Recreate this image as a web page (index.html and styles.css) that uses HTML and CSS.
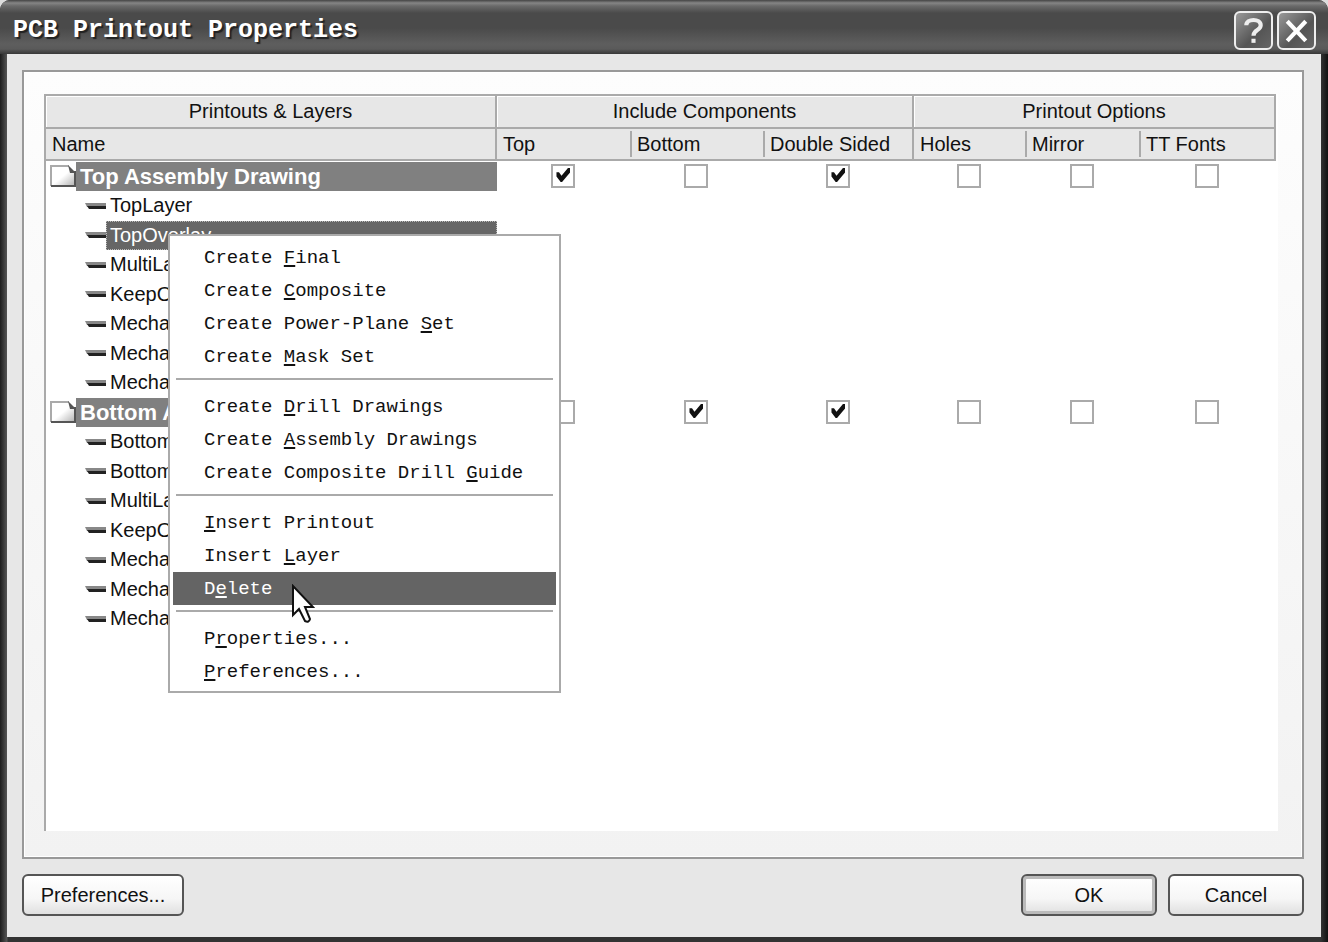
FILE: index.html
```html
<!DOCTYPE html>
<html lang="en">
<head>
    <meta charset="UTF-8">
    <meta name="viewport" content="width=device-width, initial-scale=1.0">
    <title>PCB Printout Properties</title>
    <link rel="stylesheet" href="styles.css">
</head>
<body>
    <svg width="0" height="0" class="defs" aria-hidden="true">
        <defs>
            <linearGradient id="paper" x1="0" y1="0" x2="1" y2="1">
                <stop offset="0.5" stop-color="#fff"/>
                <stop offset="1" stop-color="#b0b0b0"/>
            </linearGradient>
            <symbol id="page" viewBox="0 0 26 22">
                <path d="M1 1H19L25 7V21H1Z" fill="url(#paper)"/>
                <path d="M1 21V1H19" fill="none" stroke="#aaa" stroke-width="2"/>
                <path d="M1 21H25V6" fill="none" stroke="#555" stroke-width="2"/>
                <path d="M18 0L26 8H20Z" fill="#555"/>
            </symbol>
            <symbol id="layer" viewBox="0 0 21 6">
                <path d="M0 0H21V4H2Z" fill="#888"/>
                <path d="M2 3H21V6H4Z" fill="#222"/>
            </symbol>
        </defs>
    </svg>

    <div class="dialog">
        <div class="title-bar">
            <h1>PCB Printout Properties</h1>
            <button class="title-button" aria-label="Help">
                <svg viewBox="0 0 34 34"><path d="M10 12C10 5 24 5 24 12C24 17 17 16 17 22" fill="none" stroke="#eee" stroke-width="4"/><path d="M15 25H19V29H15Z" fill="#eee"/></svg>
            </button>
            <button class="title-button" aria-label="Close">
                <svg viewBox="0 0 34 34"><path d="M8 8L26 27M26 8L8 27" stroke="#fff" stroke-width="4"/></svg>
            </button>
        </div>

        <div class="content">
            <div class="panel">
                <div class="list">
                    <table>
                        <colgroup>
                            <col>
                            <col class="col-top">
                            <col class="col-bottom">
                            <col class="col-double">
                            <col class="col-holes">
                            <col class="col-mirror">
                            <col class="col-fonts">
                        </colgroup>
                        <thead>
                            <tr class="groups">
                                <th>Printouts &amp; Layers</th>
                                <th colspan="3">Include Components</th>
                                <th colspan="3">Printout Options</th>
                            </tr>
                            <tr class="columns">
                                <th class="first"><span>Name</span></th>
                                <th class="first"><span>Top</span></th>
                                <th><span>Bottom</span></th>
                                <th><span>Double Sided</span></th>
                                <th class="first"><span>Holes</span></th>
                                <th><span>Mirror</span></th>
                                <th><span>TT Fonts</span></th>
                            </tr>
                        </thead>
                        <tbody>
                            <tr>
                                <td><div class="printout"><svg class="page-icon"><use href="#page"/></svg><span>Top Assembly Drawing</span></div></td>
                                <td><input type="checkbox" aria-label="Top" checked></td>
                                <td><input type="checkbox" aria-label="Bottom"></td>
                                <td><input type="checkbox" aria-label="Double Sided" checked></td>
                                <td><input type="checkbox" aria-label="Holes"></td>
                                <td><input type="checkbox" aria-label="Mirror"></td>
                                <td><input type="checkbox" aria-label="TT Fonts"></td>
                            </tr>
                            <tr><td><div class="layer"><svg class="layer-icon"><use href="#layer"/></svg><span>TopLayer</span></div></td></tr>
                            <tr><td><div class="layer selected"><svg class="layer-icon"><use href="#layer"/></svg><span>TopOverlay</span></div></td></tr>
                            <tr><td><div class="layer"><svg class="layer-icon"><use href="#layer"/></svg><span>MultiLayer</span></div></td></tr>
                            <tr><td><div class="layer"><svg class="layer-icon"><use href="#layer"/></svg><span>KeepOutLayer</span></div></td></tr>
                            <tr><td><div class="layer"><svg class="layer-icon"><use href="#layer"/></svg><span>Mechanical1</span></div></td></tr>
                            <tr><td><div class="layer"><svg class="layer-icon"><use href="#layer"/></svg><span>Mechanical4</span></div></td></tr>
                            <tr><td><div class="layer"><svg class="layer-icon"><use href="#layer"/></svg><span>Mechanical16</span></div></td></tr>
                            <tr>
                                <td><div class="printout"><svg class="page-icon"><use href="#page"/></svg><span>Bottom Assembly Drawing</span></div></td>
                                <td><input type="checkbox" aria-label="Top"></td>
                                <td><input type="checkbox" aria-label="Bottom" checked></td>
                                <td><input type="checkbox" aria-label="Double Sided" checked></td>
                                <td><input type="checkbox" aria-label="Holes"></td>
                                <td><input type="checkbox" aria-label="Mirror"></td>
                                <td><input type="checkbox" aria-label="TT Fonts"></td>
                            </tr>
                            <tr><td><div class="layer"><svg class="layer-icon"><use href="#layer"/></svg><span>BottomLayer</span></div></td></tr>
                            <tr><td><div class="layer"><svg class="layer-icon"><use href="#layer"/></svg><span>BottomOverlay</span></div></td></tr>
                            <tr><td><div class="layer"><svg class="layer-icon"><use href="#layer"/></svg><span>MultiLayer</span></div></td></tr>
                            <tr><td><div class="layer"><svg class="layer-icon"><use href="#layer"/></svg><span>KeepOutLayer</span></div></td></tr>
                            <tr><td><div class="layer"><svg class="layer-icon"><use href="#layer"/></svg><span>Mechanical1</span></div></td></tr>
                            <tr><td><div class="layer"><svg class="layer-icon"><use href="#layer"/></svg><span>Mechanical4</span></div></td></tr>
                            <tr><td><div class="layer"><svg class="layer-icon"><use href="#layer"/></svg><span>Mechanical16</span></div></td></tr>
                        </tbody>
                    </table>
                </div>
            </div>

            <div class="footer">
                <button class="push preferences">Preferences...</button>
                <button class="push default">OK</button>
                <button class="push">Cancel</button>
            </div>
        </div>

        <div class="context-menu" role="menu">
            <button role="menuitem">Create <u>F</u>inal</button>
            <button role="menuitem">Create <u>C</u>omposite</button>
            <button role="menuitem">Create Power-Plane <u>S</u>et</button>
            <button role="menuitem">Create <u>M</u>ask Set</button>
            <hr>
            <button role="menuitem">Create <u>D</u>rill Drawings</button>
            <button role="menuitem">Create <u>A</u>ssembly Drawings</button>
            <button role="menuitem">Create Composite Drill <u>G</u>uide</button>
            <hr>
            <button role="menuitem"><u>I</u>nsert Printout</button>
            <button role="menuitem">Insert <u>L</u>ayer</button>
            <button role="menuitem" class="active">D<u>e</u>lete</button>
            <hr>
            <button role="menuitem">P<u>r</u>operties...</button>
            <button role="menuitem"><u>P</u>references...</button>
        </div>

        <svg class="cursor" viewBox="0 0 24 40" aria-hidden="true">
            <path d="M2 2V31L8 25L14 37Q18 39 19 35L14 23H22Z" fill="#fff" stroke="#111" stroke-width="2"/>
        </svg>
    </div>
</body>
</html>
```
FILE: styles.css
```css
* {
    box-sizing: border-box;
}
body {
    margin: 0;
    background-color: #ddd;
    font-family: "Liberation Sans", Arial, sans-serif;
    font-size: 20px;
    color: #111;
}
button {
    font: inherit;
    color: inherit;
}
.defs {
    position: absolute;
}
.dialog {
    position: relative;
    display: flex;
    flex-direction: column;
    min-height: 100vh;
    padding: 0 7px 5px;
    background: linear-gradient(to right, #1c1c1c, #555 7px, #333 8px, #333 calc(100% - 7px), #111);
    border-radius: 10px 10px 0 0;
    overflow: hidden;
}

/* title bar */
.title-bar {
    display: flex;
    align-items: center;
    gap: 4px;
    height: 54px;
    margin: 0 -7px;
    padding: 6px 12px 0 13px;
    background: linear-gradient(#444, #858585 3px, #6a6a6a 6px, #4a4a4a 13px, #4a4a4a 28px, #5e5e5e 44px, #5a5a5a 49px, #383838);
}
.title-bar h1 {
    flex: 1;
    margin: 0;
    font-family: "Liberation Mono", "Courier New", monospace;
    font-size: 25px;
    color: #fff;
    text-shadow: 2px 2px 1px #222;
}
.title-button {
    width: 39px;
    height: 39px;
    padding: 0;
    border: 2px solid #eee;
    border-radius: 6px;
    background: linear-gradient(135deg, #999, #555 60%, #666);
}
.title-button svg {
    display: block;
    width: 100%;
    height: 100%;
}

.content {
    flex: 1;
    display: flex;
    flex-direction: column;
    padding: 16px 17px 21px 15px;
    background-color: #e7e7e7;
}
.panel {
    flex: 1;
    display: flex;
    padding: 22px 24px 26px 20px;
    border: 2px solid #999;
    background: linear-gradient(#fdfdfd, #f2f2f2);
    box-shadow: inset 0 0 0 1px #fff;
}
.list {
    flex: 1;
    padding-right: 2px;
    border-left: 2px solid #aaa;
    background-color: #fff;
}

/* printouts table */
table {
    width: 100%;
    border-collapse: separate;
    border-spacing: 0;
    table-layout: fixed;
}
.col-top,
.col-bottom {
    width: 133px;
}
.col-double {
    width: 151px;
}
.col-holes {
    width: 111px;
}
.col-mirror {
    width: 114px;
}
.col-fonts {
    width: 137px;
}
th {
    height: 32px;
    padding: 0;
    font-weight: normal;
    background-color: #e7e7e7;
    border-bottom: 2px solid #aaa;
}
.groups th {
    height: 35px;
    border-top: 2px solid #aaa;
    border-right: 2px solid #aaa;
    box-shadow: inset 1px 1px #fff;
}
.columns th {
    text-align: left;
}
.columns span {
    display: block;
    padding-left: 5px;
    border-left: 2px solid #aaa;
    line-height: 26px;
}
.columns .first span {
    padding-left: 6px;
    border-left: 0;
}
.columns th:nth-child(1),
.columns th:nth-child(4),
.columns th:nth-child(7) {
    border-right: 2px solid #aaa;
}
td {
    height: 29px;
    padding: 0;
    text-align: center;
    line-height: 0;
}
tbody tr:nth-child(odd) td {
    height: 30px;
}
.printout,
.layer {
    display: flex;
    align-items: center;
    height: 100%;
    text-align: left;
    line-height: 29px;
}
.printout {
    padding-left: 4px;
    font-size: 22px;
    font-weight: bold;
    color: #fff;
}
.layer {
    padding-left: 39px;
}
.printout span,
.layer span {
    flex: 1;
    padding-left: 4px;
}
.printout span {
    background-color: #808080;
}
.page-icon {
    width: 26px;
    height: 22px;
}
.layer-icon {
    width: 21px;
    height: 6px;
}
.selected span {
    color: #fff;
    background-color: #666;
    outline: 1px dotted #bbb;
    outline-offset: -1px;
}
input[type="checkbox"] {
    appearance: none;
    width: 24px;
    height: 24px;
    margin: 0;
    border: 2px solid #aaa;
    background-color: #fff;
}
input[type="checkbox"]:checked::before {
    content: "";
    display: block;
    width: 14px;
    height: 14px;
    margin: 2px 3px;
    background-color: #111;
    clip-path: polygon(0 30%, 18% 30%, 36% 55%, 82% 0, 100% 0, 100% 28%, 40% 100%, 30% 100%, 0 60%);
}

/* bottom buttons */
.footer {
    display: flex;
    gap: 11px;
    margin-top: 15px;
}
.push {
    width: 136px;
    height: 42px;
    padding: 0;
    border: 2px solid #555;
    border-radius: 6px;
    background: linear-gradient(#fff, #f6f6f6 60%, #e0e0e0);
}
.preferences {
    width: 162px;
    margin-right: auto;
}
.default {
    box-shadow: inset 0 0 0 3px #bbb;
}

/* right-click menu over the layer list */
.context-menu {
    position: absolute;
    top: 234px;
    left: 168px;
    width: 393px;
    padding: 5px 3px 3px;
    border: 2px solid #aaa;
    background-color: #fff;
    font-family: "Liberation Mono", "Courier New", monospace;
    font-size: 19px;
}
.context-menu button {
    display: block;
    width: 100%;
    height: 33px;
    padding: 0 0 0 31px;
    border: 0;
    background: none;
    text-align: left;
}
.context-menu u {
    text-underline-offset: 2px;
    text-decoration-thickness: 2px;
}
.context-menu hr {
    height: 2px;
    margin: 5px 3px 10px;
    border: 0;
    background-color: #aaa;
}
.context-menu .active {
    background-color: #646464;
    color: #fff;
}
.cursor {
    position: absolute;
    top: 584px;
    left: 291px;
    width: 24px;
    height: 40px;
}
```
